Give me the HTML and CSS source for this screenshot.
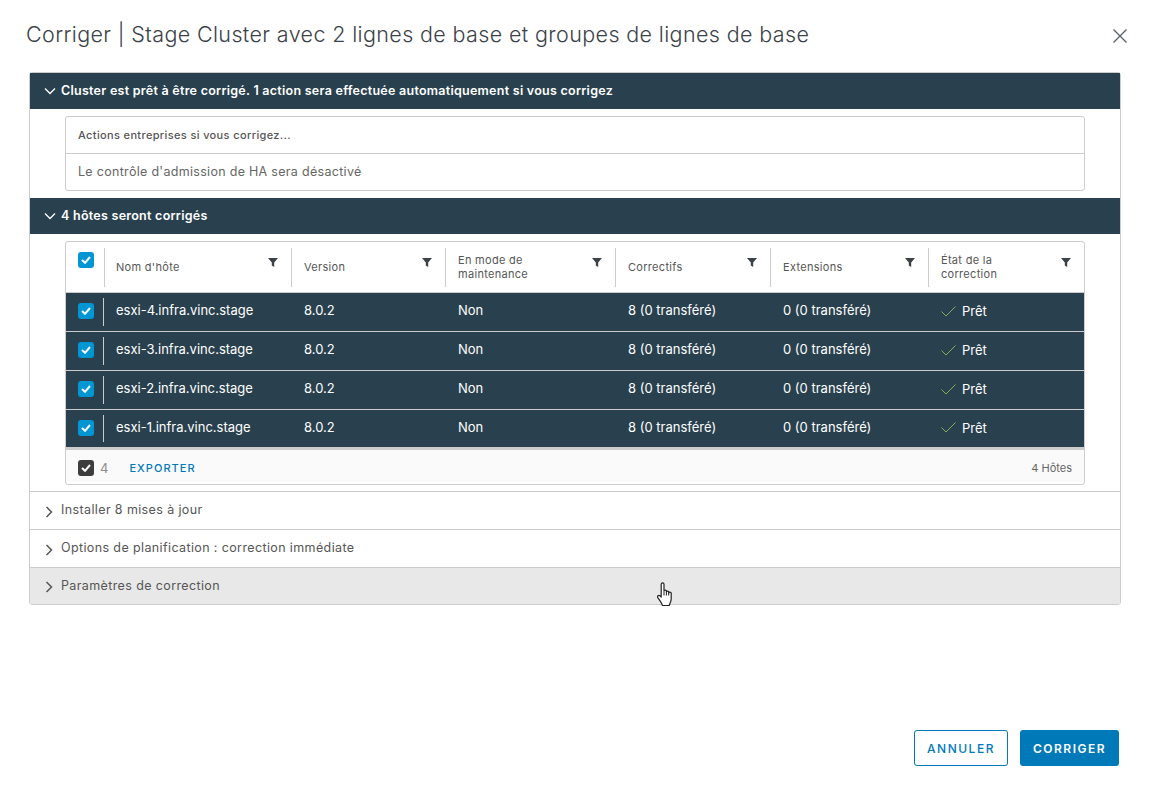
FILE: index.html
```html
<!DOCTYPE html>
<html lang="fr">
<head>
  <meta charset="UTF-8">
  <title>Corriger</title>
  <link rel="stylesheet" href="styles.css">
</head>
<body>
  <div class="modal">
    <div class="modal-title">
      <h1>Corriger | Stage Cluster avec 2 lignes de base et groupes de lignes de base</h1>
      <svg class="close" width="16" height="16" viewBox="0 0 16 16"><path d="M1.5 1.5l13 13M14.5 1.5l-13 13" stroke="#565f66" stroke-width="1.3" fill="none"/></svg>
    </div>

    <div class="stack">
      <div class="stack-head dark">
        <svg class="chev" width="12" height="12" viewBox="0 0 12 12"><path d="M1 3.5l5 5 5-5" stroke="#fff" stroke-width="1.3" fill="none"/></svg>
        <span>Cluster est prêt à être corrigé. 1 action sera effectuée automatiquement si vous corrigez</span>
      </div>
      <div class="stack-body first">
        <div class="box">
          <div class="box-title">Actions entreprises si vous corrigez...</div>
          <div class="box-text">Le contrôle d'admission de HA sera désactivé</div>
        </div>
      </div>

      <div class="stack-head dark">
        <svg class="chev" width="12" height="12" viewBox="0 0 12 12"><path d="M1 3.5l5 5 5-5" stroke="#fff" stroke-width="1.3" fill="none"/></svg>
        <span>4 hôtes seront corrigés</span>
      </div>
      <div class="stack-body second">
        <div class="grid">
          <div class="row head">
            <div class="cell check"><span class="cb"><svg width="10" height="8" viewBox="0 0 10 8"><path d="M1 4l3 2.8L9 1" stroke="#fff" stroke-width="2" fill="none"/></svg></span></div>
            <div class="cell"><span>Nom d'hôte</span><svg class="filter" width="10" height="9" viewBox="0 0 10 9"><path d="M0 0h10L6.2 4.4V9L3.8 7.6V4.4z" fill="#3b4248"/></svg></div>
            <div class="cell"><span>Version</span><svg class="filter" width="10" height="9" viewBox="0 0 10 9"><path d="M0 0h10L6.2 4.4V9L3.8 7.6V4.4z" fill="#3b4248"/></svg></div>
            <div class="cell"><span>En mode de<br>maintenance</span><svg class="filter" width="10" height="9" viewBox="0 0 10 9"><path d="M0 0h10L6.2 4.4V9L3.8 7.6V4.4z" fill="#3b4248"/></svg></div>
            <div class="cell"><span>Correctifs</span><svg class="filter" width="10" height="9" viewBox="0 0 10 9"><path d="M0 0h10L6.2 4.4V9L3.8 7.6V4.4z" fill="#3b4248"/></svg></div>
            <div class="cell"><span>Extensions</span><svg class="filter" width="10" height="9" viewBox="0 0 10 9"><path d="M0 0h10L6.2 4.4V9L3.8 7.6V4.4z" fill="#3b4248"/></svg></div>
            <div class="cell"><span>État de la<br>correction</span><svg class="filter" width="10" height="9" viewBox="0 0 10 9"><path d="M0 0h10L6.2 4.4V9L3.8 7.6V4.4z" fill="#3b4248"/></svg></div>
          </div>

          <div class="row host">
            <div class="cell check"><span class="cb"><svg width="10" height="8" viewBox="0 0 10 8"><path d="M1 4l3 2.8L9 1" stroke="#fff" stroke-width="2" fill="none"/></svg></span></div>
            <div class="cell">esxi-4.infra.vinc.stage</div>
            <div class="cell">8.0.2</div>
            <div class="cell">Non</div>
            <div class="cell">8 (0 transféré)</div>
            <div class="cell">0 (0 transféré)</div>
            <div class="cell state"><svg width="15" height="11" viewBox="0 0 15 11"><path d="M.5 5.5l4.5 4.5L14.5.5" stroke="#7fae55" stroke-width="1" fill="none"/></svg>Prêt</div>
          </div>
          <div class="row host">
            <div class="cell check"><span class="cb"><svg width="10" height="8" viewBox="0 0 10 8"><path d="M1 4l3 2.8L9 1" stroke="#fff" stroke-width="2" fill="none"/></svg></span></div>
            <div class="cell">esxi-3.infra.vinc.stage</div>
            <div class="cell">8.0.2</div>
            <div class="cell">Non</div>
            <div class="cell">8 (0 transféré)</div>
            <div class="cell">0 (0 transféré)</div>
            <div class="cell state"><svg width="15" height="11" viewBox="0 0 15 11"><path d="M.5 5.5l4.5 4.5L14.5.5" stroke="#7fae55" stroke-width="1" fill="none"/></svg>Prêt</div>
          </div>
          <div class="row host">
            <div class="cell check"><span class="cb"><svg width="10" height="8" viewBox="0 0 10 8"><path d="M1 4l3 2.8L9 1" stroke="#fff" stroke-width="2" fill="none"/></svg></span></div>
            <div class="cell">esxi-2.infra.vinc.stage</div>
            <div class="cell">8.0.2</div>
            <div class="cell">Non</div>
            <div class="cell">8 (0 transféré)</div>
            <div class="cell">0 (0 transféré)</div>
            <div class="cell state"><svg width="15" height="11" viewBox="0 0 15 11"><path d="M.5 5.5l4.5 4.5L14.5.5" stroke="#7fae55" stroke-width="1" fill="none"/></svg>Prêt</div>
          </div>
          <div class="row host last">
            <div class="cell check"><span class="cb"><svg width="10" height="8" viewBox="0 0 10 8"><path d="M1 4l3 2.8L9 1" stroke="#fff" stroke-width="2" fill="none"/></svg></span></div>
            <div class="cell">esxi-1.infra.vinc.stage</div>
            <div class="cell">8.0.2</div>
            <div class="cell">Non</div>
            <div class="cell">8 (0 transféré)</div>
            <div class="cell">0 (0 transféré)</div>
            <div class="cell state"><svg width="15" height="11" viewBox="0 0 15 11"><path d="M.5 5.5l4.5 4.5L14.5.5" stroke="#7fae55" stroke-width="1" fill="none"/></svg>Prêt</div>
          </div>

          <div class="grid-foot">
            <span class="cb black"><svg width="10" height="8" viewBox="0 0 10 8"><path d="M1 4l3 2.8L9 1" stroke="#fff" stroke-width="2" fill="none"/></svg></span>
            <span class="count">4</span>
            <span class="export">EXPORTER</span>
            <span class="total">4 Hôtes</span>
          </div>
        </div>
      </div>

      <div class="stack-head closed">
        <svg class="chev" width="12" height="12" viewBox="0 0 12 12"><path d="M2.5 1l5 5-5 5" stroke="#565656" stroke-width="1.5" fill="none"/></svg>
        <span>Installer 8 mises à jour</span>
      </div>
      <div class="stack-head closed">
        <svg class="chev" width="12" height="12" viewBox="0 0 12 12"><path d="M2.5 1l5 5-5 5" stroke="#565656" stroke-width="1.5" fill="none"/></svg>
        <span>Options de planification : correction immédiate</span>
      </div>
      <div class="stack-head closed hover">
        <svg class="chev" width="12" height="12" viewBox="0 0 12 12"><path d="M2.5 1l5 5-5 5" stroke="#565656" stroke-width="1.5" fill="none"/></svg>
        <span>Paramètres de correction</span>
      </div>
    </div>

    <div class="modal-foot">
      <button class="btn outline">ANNULER</button>
      <button class="btn primary">CORRIGER</button>
    </div>
  </div>

  <!-- curseur main -->
  <svg class="cursor" width="16" height="24" viewBox="0 0 16 24">
    <path d="M4.2 2.2c0-1.8 2.8-1.8 2.8 0V9c0-1.3 2.4-1.3 2.4 0v1c0-1.2 2.3-1.2 2.3 0v1c0-1.1 2.5-1.1 2.5.2V17c0 2.5-1.2 4-2 6.5H5.5C4.5 20.5 2.8 18.5.9 15.8c-1-1.7.8-3.2 2.1-2l1.2 1.2z" fill="#fff" stroke="#222" stroke-width="1.2" stroke-linejoin="round"/>
    <path d="M7 9.5v4M9.4 10v3.5M11.7 11v2.5" stroke="#222" stroke-width="1" fill="none"/>
  </svg>
</body>
</html>
```

FILE: styles.css
```css
* {
  margin: 0;
  padding: 0;
  box-sizing: border-box;
}

body {
  height: 791px;
  background-color: #fff;
  font-family: "Inter", "Noto Sans", Arial, sans-serif;
  color: #565656;
  overflow: hidden;
  position: relative;
}

.modal {
  height: 100%;
  padding: 0 28px 0 29px;
  display: flex;
  flex-direction: column;
}

.modal-title {
  height: 72px;
  display: flex;
  justify-content: space-between;
  padding-top: 20px;
  margin-left: -3px;
  margin-right: -7px;
}

.modal-title h1 {
  font-size: 21.5px;
  line-height: 28px;
  font-weight: 300;
  color: #3b4248;
  letter-spacing: 0.37px;
}

.close {
  margin-top: 8px;
}

/* Accordeon */
.stack {
  border: 1px solid #ccc;
  border-radius: 3px;
  height: 533px;
}

.stack-head {
  display: flex;
  align-items: center;
  gap: 5px;
  padding-left: 14px;
  font-size: 12.5px;
}

.stack-head span {
  position: relative;
  top: -1px;
}

.stack-head.dark {
  height: 36px;
  background-color: #29414e;
  color: #fff;
  font-weight: 600;
  letter-spacing: 0.26px;
}

.stack-head.closed {
  height: 38px;
  border-top: 1px solid #ccc;
  color: #565656;
  font-size: 12.5px;
  letter-spacing: 0.38px;
}

.stack-head.closed .chev {
  margin-top: 2px;
}

.stack-head.hover {
  height: 37px;
  background-color: #e8e8e8;
}

.stack-body.first {
  height: 89px;
  padding: 7px 35px 0;
}

.stack-body.second {
  height: 257px;
  padding: 7px 35px 0;
}

.box {
  border: 1px solid #ccc;
  border-radius: 3px;
  height: 75px;
}

.box-title {
  height: 37px;
  line-height: 36px;
  padding-left: 12px;
  font-size: 11px;
  font-weight: 500;
  letter-spacing: 0.36px;
  border-bottom: 1px solid #ccc;
}

.box-text {
  line-height: 36px;
  padding-left: 12px;
  font-size: 12.5px;
  letter-spacing: 0.3px;
  color: #666;
}

/* Tableau */
.grid {
  border: 1px solid #ccc;
  border-radius: 3px;
  height: 244px;
}

.row {
  display: grid;
  grid-template-columns: 38px 187px 154px 170px 155px 158px 1fr;
}

.row.head {
  height: 51px;
  border-bottom: 1px solid #ccc;
  font-size: 11px;
  line-height: 14px;
  letter-spacing: 0.3px;
  color: #565656;
}

.row.head .cell {
  position: relative;
  padding: 0 28px 1px 12px;
  margin: 6px 0 5px;
  border-left: 1px solid #ccc;
  display: flex;
  align-items: center;
}

.row.head .cell.check {
  border-left: none;
  padding: 10px 0 0 12px;
  margin: 0;
  align-items: flex-start;
}

.row.head .cell:nth-child(2) {
  padding-left: 11px;
}

.filter {
  position: absolute;
  right: 13px;
  top: 10px;
}

.row.host {
  height: 39px;
  background-color: #29414e;
  color: #fff;
  font-size: 13px;
  border-bottom: 1px solid #ccc;
}

.row.host.last {
  height: 40px;
  border-bottom: 3px solid #ccc;
}

.row.host .cell {
  display: flex;
  align-items: center;
  padding-left: 13px;
  padding-bottom: 4px;
}

.row.host .cell:nth-child(2) {
  padding-left: 12px;
}

.row.host .cell.check {
  padding-left: 12px;
  padding-bottom: 2px;
  position: relative;
}

.row.host .check::after {
  content: "";
  position: absolute;
  right: 0;
  top: 5px;
  bottom: 5px;
  width: 1px;
  background-color: #ccc;
}

.row.host .cell.state {
  gap: 6px;
  padding-bottom: 2px;
}

.cb {
  width: 16px;
  height: 16px;
  border-radius: 3px;
  background-color: #0095d3;
  display: inline-flex;
  align-items: center;
  justify-content: center;
  flex: none;
}

.cb.black {
  background-color: #3d3d3d;
}

.grid-foot {
  height: 32px;
  background-color: #fafafa;
  display: flex;
  align-items: center;
  padding: 3px 12px 0;
  font-size: 11px;
}

.count {
  margin-left: 6px;
  font-size: 13px;
  color: #8c8c8c;
}

.export {
  margin-left: 21px;
  color: #0079b8;
  letter-spacing: 1.05px;
  font-weight: 500;
}

.total {
  margin-left: auto;
  color: #666;
}

/* Boutons */
.modal-foot {
  display: flex;
  justify-content: flex-end;
  gap: 12px;
  margin-top: 125px;
  margin-right: 2px;
}

.btn {
  height: 36px;
  border-radius: 3px;
  font-family: inherit;
  font-size: 12px;
  font-weight: 500;
  letter-spacing: 1.5px;
}

.btn.outline {
  width: 94px;
  background-color: #fff;
  border: 1px solid #0079b8;
  color: #0079b8;
}

.btn.primary {
  width: 99px;
  background-color: #0079b8;
  border: none;
  color: #fff;
  font-weight: 600;
}

.cursor {
  position: absolute;
  left: 657px;
  top: 582px;
}
```
